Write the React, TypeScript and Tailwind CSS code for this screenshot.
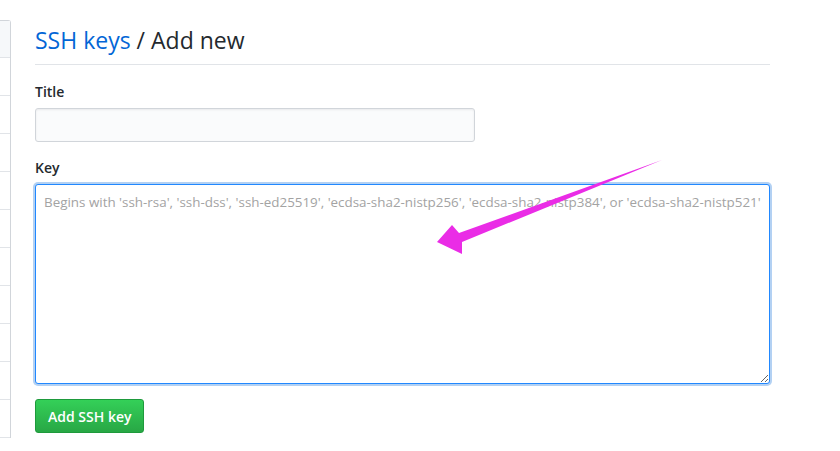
import React from "react";

const font = { fontFamily: '"Open Sans", "Noto Sans", sans-serif' };

const Sidebar = () => {
  const rows = Array.from({ length: 11 });
  return (
    <div className="mt-[20px] w-[11px] shrink-0 self-start rounded-tr-[3px] border-r border-t border-[#d1d5da]">
      {rows.map((_, i) => (
        <div
          key={i}
          className={
            "border-b border-[#e1e4e8] " + (i === 0 ? "h-[37px] bg-[#f6f8fa]" : "h-[38px] bg-white")
          }
        />
      ))}
    </div>
  );
};

// the magenta annotation arrow drawn over the screenshot
const Arrow = () => (
  <svg className="pointer-events-none absolute left-0 top-0" width="840" height="451">
    <polygon
      points="662,160 459,233 452,225 437,242 462,254 462,242"
      fill="#ea2ce6"
    />
  </svg>
);

export default function App() {
  return (
    <div className="relative flex h-[451px] w-[840px] overflow-hidden bg-white text-[#24292e]" style={font}>
      <Sidebar />

      <div className="ml-[24px] w-[735px]">
        <h2 className="mt-[24px] border-b border-[#e1e4e8] pb-[8px] text-[23px] leading-[32px] font-normal">
          <a className="text-[#0366d6]">SSH keys</a> / Add new
        </h2>

        <form className="mt-[17px]">
          <label className="block text-[14px] leading-[20px] font-semibold">Title</label>
          <input
            type="text"
            className="mt-[6px] block h-[34px] w-[440px] rounded-[3px] border border-[#d1d5da] bg-[#fafbfc] px-[8px] text-[14px] shadow-[inset_0_1px_2px_rgba(27,31,35,0.075)] outline-none"
          />

          <label className="mt-[16px] block text-[14px] leading-[20px] font-semibold">Key</label>
          <textarea
            placeholder="Begins with 'ssh-rsa', 'ssh-dss', 'ssh-ed25519', 'ecdsa-sha2-nistp256', 'ecdsa-sha2-nistp384', or 'ecdsa-sha2-nistp521'"
            className="mt-[6px] block h-[200px] w-[735px] resize-y rounded-[3px] border border-[#2188ff] bg-white px-[8px] py-[7px] text-[13.4px] leading-[20px] shadow-[0_0_0_2px_rgba(3,102,214,0.3)] outline-none placeholder:text-[#a3a3a3]"
          />

          <button
            type="button"
            className="mt-[15px] block h-[34px] rounded-[3px] border border-[#1e9a3c] bg-gradient-to-b from-[#34d058] to-[#28a745] px-[12px] text-[14px] font-semibold text-white"
          >
            Add SSH key
          </button>
        </form>
      </div>

      <Arrow />
    </div>
  );
}
